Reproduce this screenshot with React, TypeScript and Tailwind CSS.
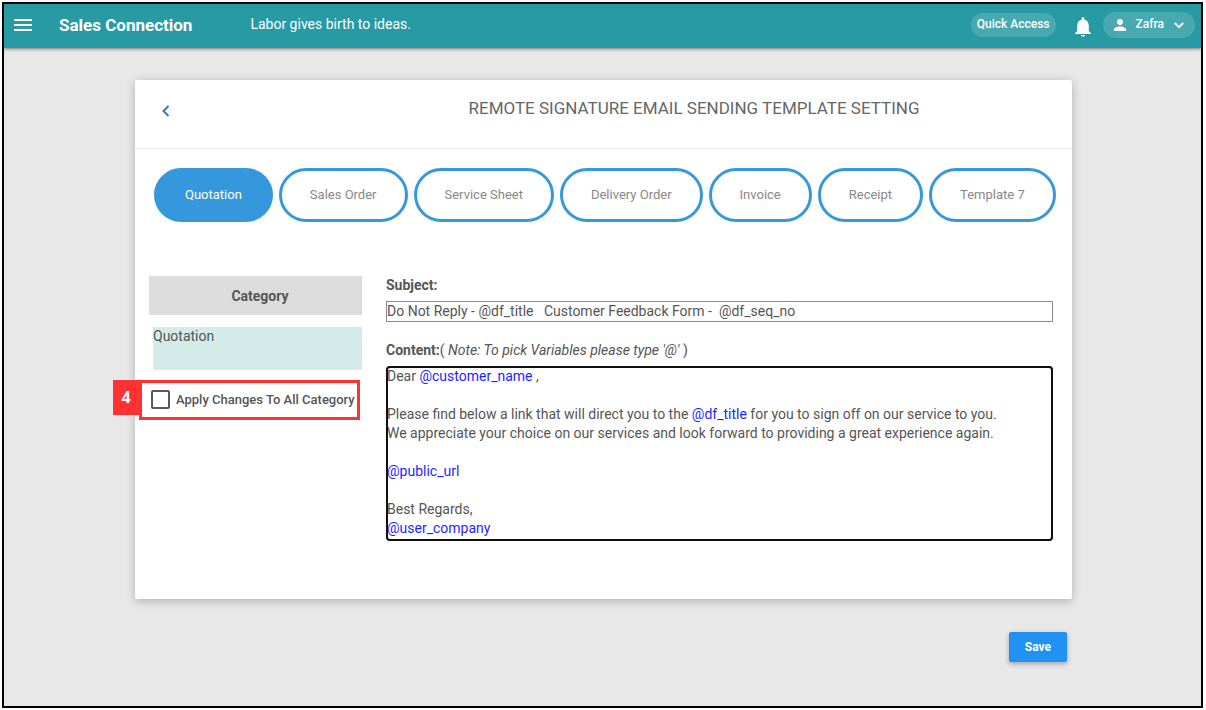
import { useState } from "react";

const templates = [
  "Quotation",
  "Sales Order",
  "Service Sheet",
  "Delivery Order",
  "Invoice",
  "Receipt",
  "Template 7",
];

function Variable({ name }: { name: string }) {
  return <span className="text-[#1f1fff]">@{name}</span>;
}

function TopBar() {
  return (
    <header className="relative flex h-11 items-center bg-[#289aa4] pr-1.5 pb-0.5 pl-[9px] text-white shadow-[0_1px_3px_rgba(0,0,0,0.5)]">
      <button type="button" aria-label="Menu" className="flex size-5 items-center">
        <svg viewBox="0 0 20 20" className="size-5" fill="currentColor" aria-hidden="true">
          <path d="M1 4h18v2H1zM1 9h18v2H1zM1 14h18v2H1z" />
        </svg>
      </button>
      <h1 className="ml-[26px] text-[17px] leading-5 font-bold">Sales Connection</h1>
      <p className="ml-[58px] pb-0.5 text-sm">Labor gives birth to ideas.</p>
      <div className="ml-auto flex items-center">
        <button
          type="button"
          className="h-6 rounded-full bg-white/15 px-1.5 pb-0.5 text-xs font-medium"
        >
          Quick Access
        </button>
        <button type="button" aria-label="Notifications" className="ml-[19px]">
          <svg viewBox="0 0 16 20" className="mt-1 h-5 w-4" fill="currentColor" aria-hidden="true">
            <path d="M8 19.500c1.200 0 2-.7 2-1.600H6c0 .9.800 1.600 2 1.600zM13.800 14V9c0-3.300-1.500-5.700-4.400-6.500V1.700C9.400.8 8.800.2 8 .2S6.600.8 6.600 1.700v.8C3.700 3.300 2.200 5.700 2.200 9v5L0 16.200V17h16v-.8z" />
          </svg>
        </button>
        <button
          type="button"
          className="ml-3 flex h-[26px] items-center rounded-full bg-white/15 px-[11px] text-xs font-medium"
        >
          <svg viewBox="0 0 12 12" className="size-3" fill="currentColor" aria-hidden="true">
            <path d="M6 6a3 3 0 1 0 0-6 3 3 0 0 0 0 6zM6 7.500c-2 0-6 1-6 3V12h12v-1.500c0-2-4-3-6-3z" />
          </svg>
          <span className="ml-[10px] pb-0.5">Zafra</span>
          <svg
            viewBox="0 0 10 10"
            className="ml-[10px] size-2.5"
            fill="none"
            stroke="currentColor"
            strokeWidth="1.800"
            aria-hidden="true"
          >
            <path d="M0.800 3 5 7.200 9.200 3" />
          </svg>
        </button>
      </div>
    </header>
  );
}

function TemplateTabs() {
  const [active, setActive] = useState("Quotation");
  return (
    <nav className="flex flex-wrap gap-1.5 pt-[19px] pr-2 pl-[19px]">
      {templates.map((name) => (
        <button
          key={name}
          type="button"
          onClick={() => setActive(name)}
          className={
            "h-[54px] rounded-full border-3 border-[#3598dc] px-7 text-[13px] " +
            (active === name ? "bg-[#3598dc] text-white" : "bg-white text-[#888]")
          }
        >
          {name}
        </button>
      ))}
    </nav>
  );
}

function CategoryPanel() {
  return (
    <aside className="w-[213px] shrink-0">
      <h3 className="bg-[#dcdcdc] pt-[11px] pb-[9px] pl-[9px] text-center text-sm leading-[19px] font-bold">
        Category
      </h3>
      <button
        type="button"
        className="mt-3 ml-1 flex h-[43px] w-[209px] items-start bg-[#d4ece9] text-left text-sm leading-[19px]"
      >
        Quotation
      </button>
      <div className="relative mt-5 ml-0.5">
        <label className="flex items-center text-[13px] leading-[19px] font-medium">
          <input
            type="checkbox"
            className="mr-1.5 size-[19px] appearance-none rounded-xs border-2 border-[#5a5a5a] bg-white checked:bg-[#3598dc]"
          />
          Apply Changes To All Category
        </label>
        <div className="pointer-events-none absolute -top-2.5 -left-[38px] flex items-start">
          <span className="flex h-[35px] w-[26px] items-center justify-center bg-[#ff3131] pb-0.5 font-['Open_Sans'] text-base font-bold text-white">
            4
          </span>
          <span className="h-10 w-[221px] border-3 border-[#ff3131]" />
        </div>
      </div>
    </aside>
  );
}

function MessageForm() {
  return (
    <section className="min-w-0 flex-1 text-sm leading-[19px]">
      <label htmlFor="subject" className="block font-bold">
        Subject:
      </label>
      <input
        id="subject"
        type="text"
        defaultValue={"Do Not Reply - @df_title   Customer Feedback Form -  @df_seq_no"}
        className="mt-1.5 block h-[21px] w-full border border-[#8a8a8a] bg-white pb-0.5 outline-none"
      />
      <p id="content-label" className="mt-[19px]">
        <b>Content:</b>( <i>Note: To pick Variables please type '@'</i> )
      </p>
      <div
        role="textbox"
        aria-multiline="true"
        aria-labelledby="content-label"
        contentEditable
        suppressContentEditableWarning
        className="mt-1.5 rounded-sm border border-[#101010] pb-0.5 outline-2 -outline-offset-2 outline-[#101010]"
      >
        <p>
          Dear <Variable name="customer_name" /> ,
        </p>
        <br />
        <p>
          Please find below a link that will direct you to the <Variable name="df_title" /> for you
          to sign off on our service to you.
        </p>
        <p>
          We appreciate your choice on our services and look forward to providing a great experience
          again.
        </p>
        <br />
        <p>
          <Variable name="public_url" />
        </p>
        <br />
        <p>Best Regards,</p>
        <p>
          <Variable name="user_company" />
        </p>
      </div>
    </section>
  );
}

export default function App() {
  return (
    <div className="flex min-h-screen flex-col bg-white py-0.5 pr-[3px] pl-0.5 font-['Roboto',sans-serif] text-[#555]">
      <div className="flex flex-1 flex-col border-2 border-black bg-[#e8e8e8]">
        <TopBar />
        <main className="pt-8 pr-[129px] pb-11 pl-[131px]">
          <div className="rounded-xs bg-white pb-[58px] shadow-[0_2px_10px_rgba(0,0,0,0.25)]">
            <div className="flex h-[69px] items-center border-b border-[#e8e8e8] pb-2.5">
              <div className="w-[181px] pl-[26px]">
                <button type="button" aria-label="Back" className="block pt-1">
                  <svg
                    viewBox="0 0 10 14"
                    className="h-3.5 w-2.5"
                    fill="none"
                    stroke="#337ab7"
                    strokeWidth="2"
                    aria-hidden="true"
                  >
                    <path d="M7.500 2 2.500 7l5 5" />
                  </svg>
                </button>
              </div>
              <h2 className="flex-1 text-center text-[17px] text-[#666] uppercase">
                Remote Signature Email Sending Template Setting
              </h2>
            </div>
            <TemplateTabs />
            <div className="flex gap-6 pt-[54px] pr-[19px] pl-3.5">
              <CategoryPanel />
              <MessageForm />
            </div>
          </div>
          <div className="mt-[33px] flex justify-end pr-[5px]">
            <button
              type="button"
              className="h-[30px] rounded-xs bg-[#2191f3] px-4 text-xs font-bold text-white shadow-[0_2px_5px_rgba(0,0,0,0.3)]"
            >
              Save
            </button>
          </div>
        </main>
      </div>
    </div>
  );
}
